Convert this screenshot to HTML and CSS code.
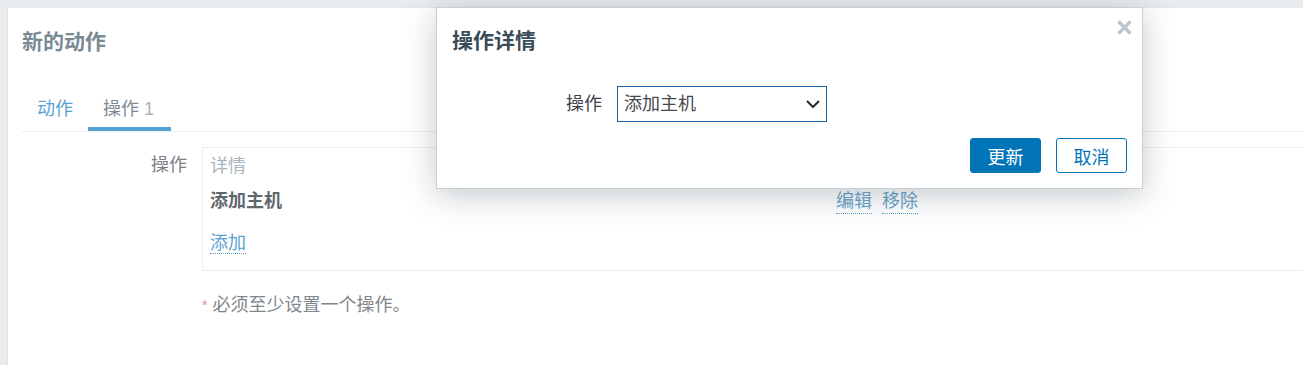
FILE: index.html
```html
<!DOCTYPE html>
<html lang="zh-CN">
<head>
  <meta charset="UTF-8" />
  <title>新的动作</title>
  <link rel="stylesheet" href="styles.css">
</head>
<body>
  <div class="page">
    <!-- Main panel behind the dialog -->
    <div class="panel">
      <h1 class="page-title">新的动作</h1>

      <ul class="tabs">
        <li class="tab"><a href="#">动作</a></li>
        <li class="tab active"><a href="#">操作 <span class="count">1</span></a></li>
      </ul>

      <div class="form-row">
        <div class="form-label">操作</div>
        <div class="form-field">
          <div class="op-table">
            <div class="op-head">详情</div>
            <div class="op-row">
              <div class="op-name">添加主机</div>
              <div class="op-actions">
                <a href="#" class="link">编辑</a>
                <a href="#" class="link">移除</a>
              </div>
            </div>
            <div class="op-add"><a href="#" class="link">添加</a></div>
          </div>
          <p class="required"><span class="star">*</span> 必须至少设置一个操作。</p>
        </div>
      </div>
    </div>

    <!-- Operation details dialog -->
    <div class="dialog">
      <button class="dialog-close" aria-label="关闭">
        <svg width="17" height="15" viewBox="0 0 17 15">
          <path d="M2.5 1.5 L14.5 13.5 M14.5 1.5 L2.5 13.5" stroke="#bcc5ca" stroke-width="3.2" fill="none" />
        </svg>
      </button>
      <h4 class="dialog-title">操作详情</h4>

      <div class="dialog-row">
        <label class="dialog-label">操作</label>
        <div class="select">
          <span>添加主机</span>
          <svg width="14" height="8" viewBox="0 0 14 8">
            <polyline points="1,1 7,7 13,1" stroke="#1f2c33" stroke-width="2" fill="none" />
          </svg>
        </div>
      </div>

      <div class="dialog-footer">
        <button class="btn btn-primary">更新</button>
        <button class="btn btn-alt">取消</button>
      </div>
    </div>
  </div>
</body>
</html>
```

FILE: styles.css
```css
/* Basic reset */
* { margin: 0; padding: 0; box-sizing: border-box; }
html, body { width: 100%; height: 100%; }

body {
  background-color: #e9ecee;
  font-family: "Liberation Sans", "Noto Sans CJK SC", sans-serif;
  font-size: 18px;
  line-height: 24px;
  color: #6f787d;
  overflow: hidden;
}

a { text-decoration: none; }
ul { list-style: none; }

.page {
  position: relative;
  height: 100%;
  padding: 7px 0 0 7px;
}

/* White panel, its right edge lies outside the window */
.panel {
  background: #fff;
  border-left: 1px solid #dde2e5;
  border-top: 1px solid #e3e7ea;
  height: 100%;
  padding: 19px 0 0 14px;
}

.page-title {
  font-size: 21px;
  line-height: 30px;
  font-weight: bold;
  color: #798a94;
}

/* Tabs */
.tabs {
  display: flex;
  margin-top: 40px;
  border-bottom: 1px solid #ebeef0;
}
.tab a {
  display: block;
  padding: 0 15px 6px;
  border-bottom: 4px solid transparent;
  color: #5aa2d1;
}
.tab.active a {
  padding-right: 17px;
  color: #7d8a92;
  border-bottom-color: #55a2d4;
}
.tab .count { color: #a8b6bf; }

/* Operations form */
.form-row {
  display: flex;
  gap: 15px;
  margin-top: 15px;
}
.form-label {
  flex-shrink: 0;
  width: 165px;
  text-align: right;
  padding-top: 6px;
  color: #7b8084;
}
.form-field {
  flex: 1;
  min-width: 0;
}

.op-table {
  border: 1px solid #ebeef0;
  border-right: none;
  padding: 6px 7px 15px;
}
.op-head { color: #a9b5bc; }
.op-row {
  display: grid;
  grid-template-columns: 626px 1fr;
  margin-top: 11px;
}
.op-name {
  font-weight: bold;
  color: #5f676c;
}
.op-actions {
  display: flex;
  gap: 10px;
}
.op-add { margin-top: 17px; }

.link {
  color: #5aa2d1;
  border-bottom: 1px dotted #5aa2d1;
}
.op-actions .link {
  color: #6aa4c8;
  border-bottom-color: #5aa2d1;
}

.required {
  margin-top: 22px;
  color: #80878b;
}
.required .star {
  color: #f08a8a;
  font-size: 14px;
  vertical-align: top;
}

/* Dialog laid over the page */
.dialog {
  position: absolute;
  left: 436px;
  top: 7px;
  width: 707px;
  background: #fff;
  border: 1px solid #c8d0d4;
  box-shadow: 0 6px 30px rgba(40, 60, 75, 0.28);
  padding: 18px 15px 15px;
}

.dialog-close {
  position: absolute;
  top: 12px;
  right: 9px;
  border: none;
  background: none;
  display: flex;
}

.dialog-title {
  font-size: 21px;
  line-height: 30px;
  font-weight: bold;
  color: #3b4d59;
}

.dialog-row {
  display: flex;
  align-items: center;
  gap: 15px;
  margin-top: 30px;
}
.dialog-label {
  width: 150px;
  text-align: right;
  color: #3e4346;
}

.select {
  width: 210px;
  height: 36px;
  border: 1px solid #1a65a3;
  padding: 0 6px;
  display: flex;
  align-items: center;
  justify-content: space-between;
  color: #45494c;
}

.dialog-footer {
  display: flex;
  justify-content: flex-end;
  gap: 15px;
  margin-top: 16px;
}

.btn {
  width: 71px;
  height: 35px;
  border-radius: 3px;
  font-family: inherit;
  font-size: 18px;
  cursor: pointer;
}
.btn-primary {
  background: #0275b8;
  border: 1px solid #0275b8;
  color: #fff;
}
.btn-alt {
  background: #fff;
  border: 1px solid #0275b8;
  color: #0275b8;
}
```
